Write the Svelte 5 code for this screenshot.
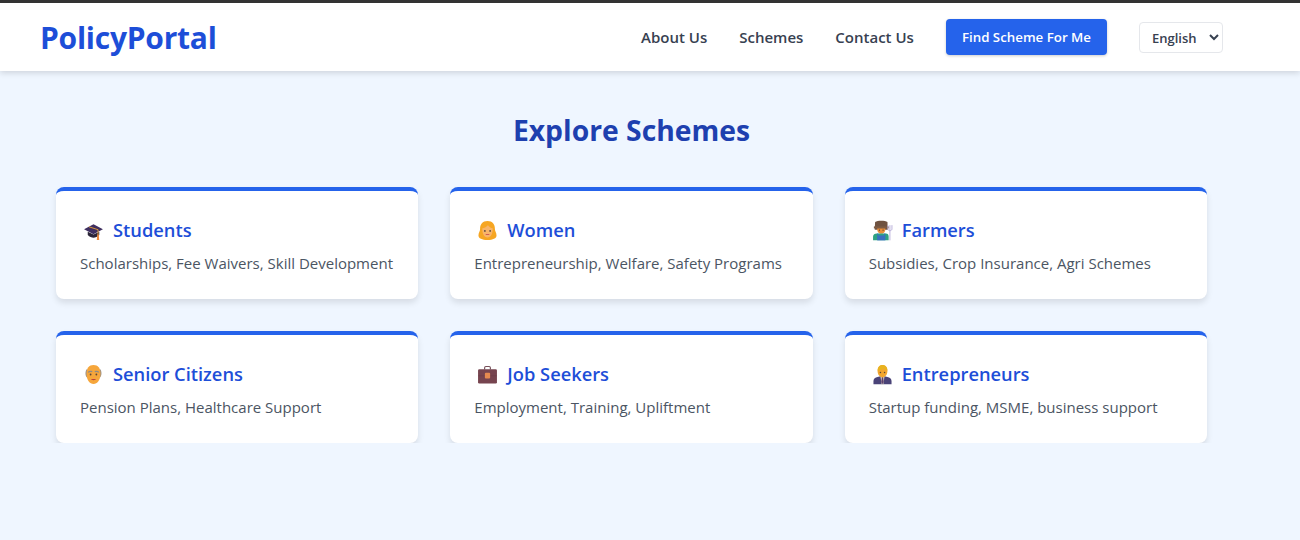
<script>
  const links = ["About Us", "Schemes", "Contact Us"];

  const schemes = [
    { icon: "cap", title: "Students", text: "Scholarships, Fee Waivers, Skill Development" },
    { icon: "woman", title: "Women", text: "Entrepreneurship, Welfare, Safety Programs" },
    { icon: "farmer", title: "Farmers", text: "Subsidies, Crop Insurance, Agri Schemes" },
    { icon: "elder", title: "Senior Citizens", text: "Pension Plans, Healthcare Support" },
    { icon: "case", title: "Job Seekers", text: "Employment, Training, Upliftment" },
    { icon: "suit", title: "Entrepreneurs", text: "Startup funding, MSME, business support" }
  ];
</script>

<header class="navbar">
  <div class="logo">PolicyPortal</div>
  <nav class="links">
    {#each links as link}
      <a href="#top">{link}</a>
    {/each}
    <button class="cta">Find Scheme For Me</button>
    <select class="lang">
      <option>English</option>
    </select>
  </nav>
</header>

<main class="content">
  <h2>Explore Schemes</h2>
  <div class="grid">
    {#each schemes as s}
      <section class="card">
        <h3>
          <svg class="emoji" viewBox="-2 -2 28 28" aria-hidden="true">
            {#if s.icon === "cap"}
              <path d="M.5 10.500 12 4.500 23.500 10.500 12 16.500Z" fill="#3f2f60" />
              <path d="M5 13.500v4c2 2.300 4.800 3.300 7 3.300s5-1 7-3.300v-4L12 17Z" fill="#2b2438" />
              <path d="M6.500 7.500 17.500 11v6" fill="none" stroke="#e9a23b" stroke-width="1.100" />
              <path d="M16.600 16.500h1.800l.6 7h-3Z" fill="#ef8a3c" />
            {:else if s.icon === "woman"}
              <path d="M12 .5C6 .5 2.800 4.800 3 10c.1 2.800-2 5-2 8 0 3.500 4.500 5.500 11 5.500S23 21.500 23 18c0-3-2.100-5.200-2-8C21.200 4.800 18 .5 12 .5Z" fill="#f6a623" />
              <path d="M12.500 5.500c-1.500 2-4 3.200-6.800 3.800C5.300 15.500 8 20.500 12 20.500s6.700-5 6.300-11.200c-2.300-.5-4.500-1.800-5.800-3.800Z" fill="#f8b46a" />
              <circle cx="8.800" cy="12.500" r="1.100" fill="#5a4a42" />
              <circle cx="15.200" cy="12.500" r="1.100" fill="#5a4a42" />
              <path d="M9.500 16.500h5c-.6 1.400-4.400 1.400-5 0Z" fill="#c2414b" />
            {:else if s.icon === "farmer"}
              <path d="M3 1.500 2.500 11h16L18 1.500C15 -.5 6 -.5 3 1.500Z" fill="#6f5240" transform="translate(0 0)" />
              <path d="M1.500 7h18v2.500h-18Z" fill="#7d5c45" />
              <path d="M5.500 9.500h10c0 4.500-2.200 6.500-5 6.500s-5-2-5-6.500Z" fill="#ea8f3c" />
              <circle cx="8.300" cy="11.500" r=".8" fill="#4a3528" />
              <circle cx="12.700" cy="11.500" r=".8" fill="#4a3528" />
              <path d="M.5 24v-4.500c0-2.800 2-4 4.500-4h11c2.500 0 3.500 1.500 3.500 4V24Z" fill="#2fa383" />
              <path d="M5.500 24v-6h10v6Z" fill="#3a6fc0" />
              <path d="M6.200 15.500v3M14.800 15.500v3" stroke="#3a6fc0" stroke-width="1.300" />
              <path d="M21 24V12M18.500 5.500V10c0 1.500 1.200 2.200 2.500 2.200s2.500-.7 2.500-2.200V5.500M21 5.500V12" fill="none" stroke="#b3a8d6" stroke-width="1.100" />
            {:else if s.icon === "elder"}
              <path d="M4.500 5c-3 2-3 9 0 11ZM19.500 5c3 2 3 9 0 11Z" fill="#98918c" />
              <path d="M12 .5C6.500.5 3.500 4.500 3.500 11c0 7.500 4 12.500 8.500 12.500S20.500 18.500 20.500 11C20.500 4.500 17.500.5 12 .5Z" fill="#f6a63b" />
              <path d="M5.500 9.500c1-1.200 3-1.500 5-1M18.500 9.500c-1-1.200-3-1.500-5-1" stroke="#8f8a86" stroke-width="1.500" fill="none" />
              <circle cx="8.500" cy="12" r="1.100" fill="#5a4538" />
              <circle cx="15.500" cy="12" r="1.100" fill="#5a4538" />
              <path d="M9 17.500h6c-.6 1.800-5.400 1.800-6 0Z" fill="#b8403a" />
            {:else if s.icon === "case"}
              <path d="M8.500 6V3.800c0-1 .6-1.500 1.500-1.500h4c.9 0 1.500.5 1.500 1.500V6" fill="none" stroke="#77505a" stroke-width="1.400" />
              <rect x=".5" y="5.500" width="23" height="17.500" rx="1.500" fill="#76444f" />
              <path d="M.5 13.500h23" stroke="#63384380" stroke-width=".9" />
              <rect x="8.800" y="10" width="6.400" height="7" rx="1.200" fill="#e68a50" />
            {:else}
              <path d="M1 24v-4c0-3 2.200-4.500 5-5l3.500-1h5l3.500 1c2.800.5 5 2 5 5v4Z" fill="#4a4378" />
              <path d="M9.500 14h5l-1.500 10h-2Z" fill="#e8dfc8" />
              <path d="M11.200 15h1.600l.7 6-1.500 3-1.500-3Z" fill="#5d3f6e" />
              <path d="M6 7.500C6 3 8.500.5 12 .5s6 2.500 6 7c0 5-2.800 8-6 8s-6-3-6-8Z" fill="#f2a62f" />
              <path d="M6 7C6.200 2.800 8.800.5 12 .5s5.800 2.300 6 6.500c-2-.3-3.500-1.500-4.200-2.500C12.500 6 9 7 6 7Z" fill="#e8b31f" />
              <circle cx="9.500" cy="9.500" r=".9" fill="#5a4538" />
              <circle cx="14.500" cy="9.500" r=".9" fill="#5a4538" />
            {/if}
          </svg>
          <span>{s.title}</span>
        </h3>
        <p>{s.text}</p>
      </section>
    {/each}
  </div>
</main>

<style>
  :global(body) {
    margin: 0;
    background: #eff6ff;
    font-family: "Open Sans", "Noto Sans", "Liberation Sans", sans-serif;
    color: #374151;
  }

  .navbar {
    display: flex;
    align-items: center;
    justify-content: space-between;
    box-sizing: border-box;
    height: 71px;
    padding: 0 77px 0 40px;
    background: #fff;
    border-top: 3px solid #333;
    box-shadow: 0 2px 6px rgba(0, 0, 0, 0.14);
  }

  .logo {
    font-size: 30px;
    font-weight: 700;
    letter-spacing: -0.25px;
    color: #1d4ed8;
  }

  .links {
    display: flex;
    align-items: center;
    gap: 32px;
  }

  .links a {
    font-size: 15px;
    font-weight: 600;
    color: #374151;
    text-decoration: none;
  }

  .cta {
    height: 36px;
    padding: 0 16px;
    border: 0;
    border-radius: 4px;
    background: #2563eb;
    color: #fff;
    font: 600 13.300px "Open Sans", sans-serif;
    box-shadow: 0 1px 3px rgba(0, 0, 0, 0.2);
  }

  .lang {
    width: 84px;
    height: 31px;
    padding: 2px 4px 0 8px;
    border: 1px solid #e5e7eb;
    border-radius: 4px;
    background: #fff;
    color: #374151;
    font: 600 13px "Open Sans", sans-serif;
  }

  .content {
    padding: 39px 93px 0 56px;
  }

  h2 {
    margin: 0 0 37px;
    text-align: center;
    font-size: 28.300px;
    line-height: 40px;
    font-weight: 700;
    color: #1e40af;
  }

  .grid {
    display: grid;
    grid-template-columns: repeat(3, 1fr);
    gap: 32px;
  }

  .card {
    box-sizing: border-box;
    height: 112px;
    padding: 26px 24px 0;
    background: #fff;
    border-top: 4px solid #2563eb;
    border-radius: 8px;
    box-shadow: 0 4px 6px rgba(0, 0, 0, 0.1);
  }

  h3 {
    display: flex;
    align-items: center;
    gap: 8px;
    margin: 0 0 8px;
    font-size: 18.300px;
    line-height: 26px;
    font-weight: 600;
    color: #1d4ed8;
  }

  .emoji {
    width: 23px;
    height: 23px;
    margin-left: 2px;
  }

  p {
    margin: 0;
    font-size: 15px;
    line-height: 24px;
    color: #4b5563;
  }
</style>
